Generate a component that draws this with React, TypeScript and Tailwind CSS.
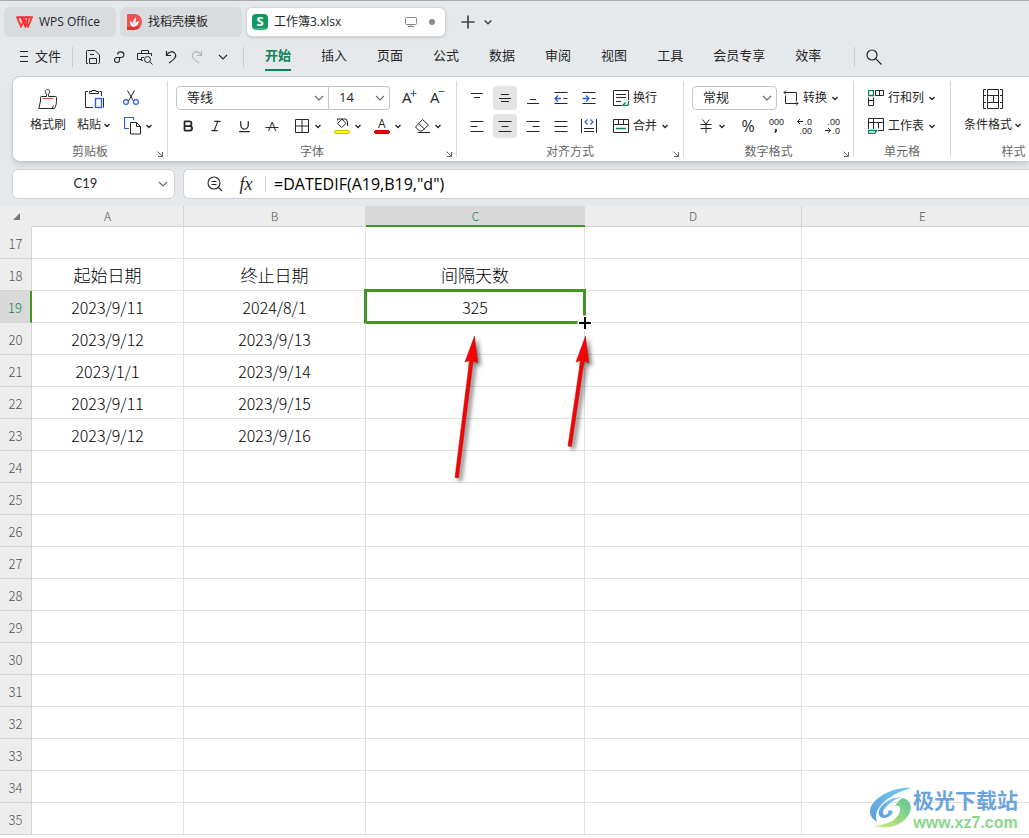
import { FC, ReactNode, useState } from 'react';
import { Bold, Italic, Underline } from 'lucide-react';

interface IRow {
  id: number;
  cells: string[];
}

const columns = ['A', 'B', 'C', 'D', 'E'];

const filled: Record<number, string[]> = {
  18: ['起始日期', '终止日期', '间隔天数'],
  19: ['2023/9/11', '2024/8/1', '325'],
  20: ['2023/9/12', '2023/9/13'],
  21: ['2023/1/1', '2023/9/14'],
  22: ['2023/9/11', '2023/9/15'],
  23: ['2023/9/12', '2023/9/16'],
};

const rows: IRow[] = Array.from({ length: 19 }, (_, i) => ({
  id: 17 + i,
  cells: columns.map((_, c) => filled[17 + i]?.[c] ?? ''),
}));

const menu = ['开始', '插入', '页面', '公式', '数据', '审阅', '视图', '工具', '会员专享', '效率'];

const BLUE = '#2b5fe0';
const GREEN = '#0b8457';

interface IIcon {
  w?: number;
  h?: number;
  children: ReactNode;
}

const Icon: FC<IIcon> = ({ w = 16, h = 16, children }) => (
  <svg
    width={w}
    height={h}
    viewBox={`0 0 ${w} ${h}`}
    fill="none"
    stroke="currentColor"
    className="shrink-0"
    aria-hidden="true"
  >
    {children}
  </svg>
);

const Caret = () => (
  <Icon w={8} h={8}>
    <path d="M1.5 3L4 5.5L6.5 3" strokeWidth="1.4" />
  </Icon>
);

const Chevron = () => (
  <Icon w={10} h={8}>
    <path d="M1 2l4 4l4-4" strokeWidth="1.1" />
  </Icon>
);

const Separator = () => <div className="h-5 w-px bg-[#c9cccf]" />;

interface ITool {
  title: string;
  active?: boolean;
  children: ReactNode;
}

const Tool: FC<ITool> = ({ title, active, children }) => (
  <button
    type="button"
    title={title}
    className={
      active
        ? 'flex size-6 items-center justify-center rounded bg-[#e4e4e4]'
        : 'flex size-6 items-center justify-center rounded hover:bg-gray-100'
    }
  >
    {children}
  </button>
);

const DropTool: FC<ITool> = ({ title, children }) => (
  <button type="button" title={title} className="flex h-6 w-10 items-center rounded hover:bg-gray-100">
    <span className="flex w-6 justify-center">{children}</span>
    <Caret />
  </button>
);

interface ITextTool {
  icon: ReactNode;
  label: string;
  drop?: boolean;
}

const TextTool: FC<ITextTool> = ({ icon, label, drop }) => (
  <button type="button" className="flex h-6 items-center gap-1 rounded hover:bg-gray-100">
    {icon}
    <span>{label}</span>
    {drop ? <Caret /> : null}
  </button>
);

interface IPicker {
  label: string;
  value: string;
  options: string[];
  className: string;
}

const Picker: FC<IPicker> = ({ label, value, options, className }) => (
  <div className={'relative h-6 border border-[#c4c6c8] bg-white ' + className}>
    <select
      aria-label={label}
      defaultValue={value}
      className="h-full w-full appearance-none pl-[10px] text-[13px] outline-none"
    >
      {options.map((option) => (
        <option key={option}>{option}</option>
      ))}
    </select>
    <span className="pointer-events-none absolute right-1 top-[7px] text-[#666]">
      <Chevron />
    </span>
  </div>
);

interface IGroup {
  title: string;
  className: string;
  launcher?: boolean;
  children: ReactNode;
}

const Group: FC<IGroup> = ({ title, className, launcher = true, children }) => (
  <section className={'my-1 flex shrink-0 flex-col border-r border-[#d6d8da] pt-[3px] ' + className}>
    <div className="h-14 shrink-0">{children}</div>
    <div className="relative flex grow items-end justify-center leading-[10px] text-[#666]">
      <span>{title}</span>
      {launcher ? (
        <button type="button" title={title + '设置'} className="absolute bottom-0 right-1">
          <Icon w={6} h={6}>
            <path d="M.5 .5L5 5M5.5 1v4.5H1" />
          </Icon>
        </button>
      ) : null}
    </div>
  </section>
);

const TitleBar = () => (
  <header className="flex h-[38px] shrink-0 items-center gap-1 border-t border-[#aaa8ab] px-1 pt-[5px]">
    <button type="button" className="flex h-[30px] w-28 items-center gap-[6px] rounded-md bg-[#d9dcdf] pl-3">
      <Icon w={17} h={12}>
        <path d="M.5 1.2H12.5L9.5 10.5L5.5 1.5" stroke="#f5243c" strokeWidth="1.9" />
        <path d="M1 1.2L5 10.5L8.5 3L12 10.5L16 1.2H12.5" stroke="#fb3a2c" strokeWidth="1.9" />
      </Icon>
      WPS Office
    </button>
    <button type="button" className="flex h-[30px] w-[122px] items-center gap-[6px] rounded-md bg-[#d9dcdf] pl-[7px]">
      <Icon w={15} h={16}>
        <path d="M1 0h6.5a7.5 8 0 0 1 0 16H1a1 1 0 0 1-1-1V1a1 1 0 0 1 1-1z" fill="#ee5253" stroke="none" />
        <path d="M0 13h12.5A7.5 8 0 0 1 7.5 16H1a1 1 0 0 1-1-1z" fill="#d93638" stroke="none" />
        <path
          d="M6.5 13C3.5 12 3 9.5 3 7C5 8 6 9.5 6.5 11C5.5 8 6.5 5 8.5 3.5C9.5 6 8.5 8.5 7.5 10.5C8.5 8.5 10 7.5 12 7C11.5 10 9.5 12.5 6.5 13z"
          fill="#fff"
          stroke="none"
        />
      </Icon>
      找稻壳模板
    </button>
    <div className="flex h-[30px] w-[200px] items-center rounded-md border border-[#d3d5d8] bg-white pl-[5px] pr-[10px] shadow-sm">
      <span className="flex size-4 items-center justify-center rounded-sm border-b-2 border-[#3bb57e] bg-[#109a62] text-[13px] font-bold leading-none text-white">
        S
      </span>
      <span className="ml-[6px] grow">工作簿3.xlsx</span>
      <span className="mr-3 text-[#858789]">
        <Icon w={12} h={12}>
          <rect x=".5" y="1.5" width="11" height="7" rx="1" />
          <path d="M3 10.5h6M6 8.5v2" />
        </Icon>
      </span>
      <span className="size-[6px] rounded-full bg-[#8a8c8e]" />
    </div>
    <button type="button" title="新建" className="ml-[10px] text-[#444]">
      <Icon w={16} h={16}>
        <path d="M8 1.5v13M1.5 8h13" strokeWidth="1.7" />
      </Icon>
    </button>
    <button type="button" title="更多" className="ml-1 text-[#444]">
      <Icon w={8} h={8}>
        <path d="M.7 2.5L4 5.8L7.3 2.5" strokeWidth="1.5" />
      </Icon>
    </button>
  </header>
);

const quickTools = [
  {
    title: '保存',
    icon: (
      <Icon>
        <path d="M3 14.5H1.5V2.5a1 1 0 0 1 1-1H10L14.5 6v7.5a1 1 0 0 1-1 1H13M4.5 14.5V9.5h7v5zM5 5.5h4" />
      </Icon>
    ),
  },
  {
    title: '分享',
    icon: (
      <Icon w={14} h={14}>
        <path d="M5.5 4.5a3.2 2.8 0 1 1 3.2 3H5a2.5 2.5 0 1 0 2.5 2.5V8" strokeWidth="1.1" />
      </Icon>
    ),
  },
  {
    title: '打印预览',
    icon: (
      <Icon>
        <path d="M4.5 4V1.5h7V4M6 11.5H4.5V8.5H7M4 10.5H.5V4.5h14V7" />
        <circle cx="10.5" cy="10.5" r="3" />
        <path d="M12.8 12.8L15.5 15.5" />
      </Icon>
    ),
  },
  {
    title: '撤销',
    icon: (
      <Icon w={14} h={14}>
        <path d="M2.5 1v4.5H7M2.5 5.5C5 1 9 .8 11 3.5S11 9 5 13" strokeWidth="1.2" />
      </Icon>
    ),
  },
  {
    title: '恢复',
    icon: (
      <span className="text-[#b3b6b9]">
        <Icon w={14} h={14}>
          <path d="M11.5 1v4.5H7M11.5 5.5C9 1 5 .8 3 3.5S3 9 9 13" strokeWidth="1.2" />
        </Icon>
      </span>
    ),
  },
  { title: '自定义', icon: <Chevron /> },
];

interface IMenuBar {
  current: string;
  onSelect: (name: string) => void;
}

const MenuBar: FC<IMenuBar> = ({ current, onSelect }) => (
  <nav className="flex h-[38px] shrink-0 items-center text-[13px]">
    <button type="button" className="ml-5 flex items-center gap-[7px]">
      <Icon w={8} h={12}>
        <path d="M0 .5h8M0 5.5h8M0 10.5h8" />
      </Icon>
      文件
    </button>
    <div className="ml-[11px] mr-[7px]">
      <Separator />
    </div>
    {quickTools.map((tool) => (
      <button key={tool.title} type="button" title={tool.title} className="flex size-[26px] items-center justify-center">
        {tool.icon}
      </button>
    ))}
    <div className="ml-[7px] mr-[21px]">
      <Separator />
    </div>
    <div className="flex gap-[30px]">
      {menu.map((name) => (
        <button
          key={name}
          type="button"
          onClick={() => onSelect(name)}
          className={
            name === current
              ? 'h-7 whitespace-nowrap border-b-2 border-[#0b8457] font-bold text-[#0b8457]'
              : 'h-7 whitespace-nowrap border-b-2 border-transparent'
          }
        >
          {name}
        </button>
      ))}
    </div>
    <div className="ml-[33px] mr-[11px]">
      <Separator />
    </div>
    <button type="button" title="搜索">
      <Icon w={16} h={16}>
        <circle cx="6" cy="6" r="5" strokeWidth="1.2" />
        <path d="M9.8 9.8L15.5 15.5" strokeWidth="1.2" />
      </Icon>
    </button>
  </nav>
);

const ClipboardGroup = () => (
  <Group title="剪贴板" className="w-[155px]">
    <div className="flex gap-1 pl-[14px]">
      <button type="button" className="flex w-[42px] flex-col items-center pt-[5px]">
        <Icon w={20} h={20}>
          <path d="M8.5 7.5V5.5L7.5 3.5a2.2 2.2 0 1 1 4 0L10.5 5.5v2M8.5 7.5h-5a1 1 0 0 0-1 1V12L.8 19.5H16.5c1.2-2 2-5 2-7v-4a1 1 0 0 0-1-1h-7M14.5 19.5l.8-3" />
          <path d="M4.5 9.5h11" stroke="#d4581c" />
        </Icon>
        <span className="mt-2 whitespace-nowrap">格式刷</span>
      </button>
      <button type="button" className="flex w-[42px] flex-col items-center pt-[5px]">
        <Icon w={20} h={20}>
          <path d="M4 2.5H1.5v16H9M15.5 2.5h2V7M19.5 9v9.5" />
          <path d="M5.5 4.5v-2H8v-1h4v1h2.5v2z" />
          <rect x="11.5" y="9.5" width="6" height="9" stroke={BLUE} strokeWidth="1.4" />
        </Icon>
        <span className="mt-2 flex items-center gap-[2px] whitespace-nowrap">
          粘贴
          <Caret />
        </span>
      </button>
      <div>
        <div className="flex h-7 items-center">
          <Tool title="剪切">
            <Icon>
              <path d="M4.5 .5L10.5 11M11.5 .5L5.5 11" />
              <circle cx="3" cy="12" r="2.4" stroke={BLUE} strokeWidth="1.2" />
              <circle cx="13" cy="12" r="2.4" stroke={BLUE} strokeWidth="1.2" />
            </Icon>
          </Tool>
        </div>
        <div className="flex h-7 items-center pl-[2px]">
          <DropTool title="复制">
            <Icon w={18} h={18}>
              <path d="M5 11.5H.5V.5h9V3" stroke={BLUE} strokeWidth="1.2" />
              <path d="M6.5 5.5h6l4 4v7.5h-10zM12.5 5.5v4h4" />
            </Icon>
          </DropTool>
        </div>
      </div>
    </div>
  </Group>
);

const FontGroup = () => (
  <Group title="字体" className="w-[289px]">
    <div className="flex h-7 items-center pl-2">
      <Picker label="字体" value="等线" options={['等线', '宋体', '黑体']} className="w-[153px] rounded-l" />
      <Picker label="字号" value="14" options={['11', '12', '14', '16']} className="w-[61px] rounded-r border-l-0" />
      <div className="ml-[7px] flex gap-1">
        <Tool title="增大字号">
          <Icon w={18} h={22}>
            <text x="2" y="16" fontSize="15" fill="currentColor" stroke="none">A</text>
            <path d="M10.5 6.5h6M13.5 3.5v6" stroke={BLUE} strokeWidth="1.2" />
          </Icon>
        </Tool>
        <Tool title="减小字号">
          <Icon w={18} h={22}>
            <text x="2" y="16" fontSize="15" fill="currentColor" stroke="none">A</text>
            <path d="M10.5 4.5h6" stroke={BLUE} strokeWidth="1.2" />
          </Icon>
        </Tool>
      </div>
    </div>
    <div className="flex h-7 items-center pl-2">
      <div className="mr-[6px] flex gap-1">
        <Tool title="加粗">
          <Bold size={14} strokeWidth={3} />
        </Tool>
        <Tool title="倾斜">
          <Italic size={14} strokeWidth={2} />
        </Tool>
        <Tool title="下划线">
          <Underline size={15} strokeWidth={2} />
        </Tool>
        <Tool title="删除线">
          <Icon w={14} h={20}>
            <text x="3" y="15" fontSize="13" fill="currentColor" stroke="none">A</text>
            <path d="M.5 11.5h13" />
          </Icon>
        </Tool>
      </div>
      <DropTool title="边框">
        <Icon w={14} h={14}>
          <path d="M.5 .5h13v13H.5zM7 .5v13M.5 7h13" />
        </Icon>
      </DropTool>
      <DropTool title="填充颜色">
        <Icon w={18} h={18}>
          <path d="M4.5 3.5V2h8.5l1.5 3v4M9 2L4.5 6.5L8.5 10.5L13 6.5z" />
          <rect x="1.5" y="13.5" width="15" height="3" rx="1.5" fill="#ffff00" stroke="#c4c400" />
        </Icon>
      </DropTool>
      <DropTool title="字体颜色">
        <Icon w={18} h={22}>
          <text x="5" y="13" fontSize="12" fill="currentColor" stroke="none">A</text>
          <rect x="1.5" y="15.5" width="15" height="3" rx="1.5" fill="#ff0000" stroke="#c00000" />
        </Icon>
      </DropTool>
      <DropTool title="清除">
        <Icon w={16} h={16}>
          <path d="M8.5 1.5L14.5 7L8 13H5.5L1.5 9zM4.5 5.5L10.5 11M3.5 14.5h12.5" />
        </Icon>
      </DropTool>
    </div>
  </Group>
);

const AlignGroup = () => (
  <Group title="对齐方式" className="w-[227px]">
    <div className="flex h-7 items-center gap-1 pl-2">
      <Tool title="顶端对齐">
        <Icon w={14} h={14}>
          <path d="M1 2.5h12M4 6.5h6" strokeWidth="1.2" />
        </Icon>
      </Tool>
      <Tool title="垂直居中" active>
        <Icon w={14} h={14}>
          <path d="M3 3.5h8M1 7.5h12M3 10.5h8" strokeWidth="1.2" />
        </Icon>
      </Tool>
      <Tool title="底端对齐">
        <Icon w={14} h={14}>
          <path d="M4 8.5h6M1 12.5h12" strokeWidth="1.2" />
        </Icon>
      </Tool>
      <Tool title="减少缩进量">
        <Icon w={14} h={14}>
          <path d="M.5 1.5h13M.5 12.5h13M9.5 7.5h4" />
          <path d="M7 7.5H1M4 4.5l-3 3l3 3" stroke={BLUE} strokeWidth="1.3" />
        </Icon>
      </Tool>
      <Tool title="增加缩进量">
        <Icon w={14} h={14}>
          <path d="M.5 1.5h13M.5 12.5h13M9.5 7.5h4" />
          <path d="M.5 7.5h6M4 4.5l3 3l-3 3" stroke={BLUE} strokeWidth="1.3" />
        </Icon>
      </Tool>
      <div className="ml-2">
        <TextTool
          label="换行"
          icon={
            <Icon>
              <path d="M9 15.5H.5V.5h15V10M3 4.5h10M3 7.5h10M3 11.5h5" />
              <path d="M15.5 11v2.5a2 2 0 0 1-2 2H10M12.5 12.5l-3 3" stroke={GREEN} strokeWidth="1.3" />
            </Icon>
          }
        />
      </div>
    </div>
    <div className="flex h-7 items-center gap-1 pl-2">
      <Tool title="左对齐">
        <Icon w={14} h={14}>
          <path d="M.5 2.5h13M.5 7.5h7M.5 12.5h13" />
        </Icon>
      </Tool>
      <Tool title="水平居中" active>
        <Icon w={14} h={14}>
          <path d="M.5 2.5h13M3.5 7.5h7M.5 12.5h13" />
        </Icon>
      </Tool>
      <Tool title="右对齐">
        <Icon w={14} h={14}>
          <path d="M.5 2.5h13M6.5 7.5h7M.5 12.5h13" />
        </Icon>
      </Tool>
      <Tool title="两端对齐">
        <Icon w={14} h={14}>
          <path d="M.5 2.5h13M.5 7.5h13M.5 12.5h13" />
        </Icon>
      </Tool>
      <Tool title="分散对齐">
        <Icon>
          <path d="M.5 1v14M15.5 1v14M3 10.5h10M3 13.5h10" />
          <path d="M6.5 1.5L4 4l2.5 2.5M9.5 1.5L12 4L9.5 6.5" stroke={BLUE} strokeWidth="1.2" />
        </Icon>
      </Tool>
      <div className="ml-2">
        <TextTool
          label="合并"
          drop
          icon={
            <Icon>
              <path d="M.5 1.5h15v13H.5zM.5 6.5h15M5.5 1.5v5M10.5 1.5v5" />
              <path d="M3 10.5h10" stroke={GREEN} strokeWidth="1.3" />
            </Icon>
          }
        />
      </div>
    </div>
  </Group>
);

interface ITinyText {
  x: number;
  y: number;
  children: string;
}

const TinyText: FC<ITinyText> = ({ x, y, children }) => (
  <text
    x={x}
    y={y}
    fontSize="9"
    textAnchor="end"
    fill="currentColor"
    stroke="none"
    className="font-['Liberation_Sans',sans-serif]"
  >
    {children}
  </text>
);

const NumberGroup = () => (
  <Group title="数字格式" className="w-[170px]">
    <div className="flex h-7 items-center gap-[6px] pl-2">
      <Picker label="数字格式" value="常规" options={['常规', '数值', '日期']} className="w-[85px] rounded" />
      <TextTool
        label="转换"
        drop
        icon={
          <Icon>
            <path d="M3 .5L1 2.5L3 4.5M1 2.5h12.5V11M13 11.5l2 2l-2 2M15 13.5H2.5V5.5" />
          </Icon>
        }
      />
    </div>
    <div className="flex h-7 items-center pl-[10px]">
      <DropTool title="货币">
        <Icon w={12} h={14}>
          <path d="M2.5 .5L6 5L9.5 .5M6 5v9M.5 5.5h11M.5 9.5h11" />
        </Icon>
      </DropTool>
      <div className="ml-[2px] flex gap-1">
        <Tool title="百分比">
          <span className="text-base leading-6">%</span>
        </Tool>
        <Tool title="千位分隔">
          <Icon w={16} h={20}>
            <TinyText x={16} y={9}>000</TinyText>
            <path d="M8 13v2l-1 1.5" strokeWidth="1.8" />
          </Icon>
        </Tool>
        <Tool title="增加小数位">
          <Icon w={16} h={20}>
            <path d="M7 5.5H1.5M4 3L1.5 5.5L4 8" />
            <TinyText x={16} y={9}>.0</TinyText>
            <TinyText x={16} y={18}>.00</TinyText>
          </Icon>
        </Tool>
        <Tool title="减少小数位">
          <Icon w={16} h={20}>
            <TinyText x={16} y={9}>.00</TinyText>
            <path d="M1 14.5h5.5M4 12L6.5 14.5L4 17" />
            <TinyText x={16} y={18}>.0</TinyText>
          </Icon>
        </Tool>
      </div>
    </div>
  </Group>
);

const CellGroup = () => (
  <Group title="单元格" className="w-[97px]" launcher={false}>
    <div className="flex h-7 items-center pl-[14px]">
      <TextTool
        label="行和列"
        drop
        icon={
          <Icon>
            <path d="M7.5 .5h8v5h-8zM11.5 .5v5M.5 7.5v8h5v-8M.5 10.5h5" />
            <path d="M.5 .5h5v5h-5z" stroke={GREEN} strokeWidth="1.3" />
          </Icon>
        }
      />
    </div>
    <div className="flex h-7 items-center pl-[14px]">
      <TextTool
        label="工作表"
        drop
        icon={
          <Icon>
            <path d="M.5 11V.5h15v12H10M.5 4.5h15M5.5 .5v10.5M10.5 4.5v6" />
            <path d="M.5 12.5h8l-1.5 3H.5z" stroke={GREEN} strokeWidth="1.3" />
          </Icon>
        }
      />
    </div>
  </Group>
);

const StyleGroup = () => (
  <Group title="样式" className="w-[126px]" launcher={false}>
    <button type="button" className="ml-[13px] flex flex-col items-center pt-[5px]">
      <Icon w={20} h={20}>
        <path d="M3 .5H.5v19H3M17 .5h2.5v19H17M.5 6.5H3M.5 13.5H3M17 6.5h2.5M17 13.5h2.5" />
        <path d="M4.5 .5h11v19h-11zM4.5 6.5h11M4.5 13.5h11M10.5 6.5v7" />
      </Icon>
      <span className="mt-2 flex items-center gap-[2px] whitespace-nowrap">
        条件格式
        <Caret />
      </span>
    </button>
  </Group>
);

const FormulaBar = () => (
  <div className="flex shrink-0 gap-2 py-[7px] pl-3">
    <div className="flex h-[30px] w-[163px] items-center rounded-md border border-[#cfd1d3] bg-white pr-[6px]">
      <input
        aria-label="名称框"
        defaultValue="C19"
        className="min-w-0 grow text-center font-['Lato',sans-serif] text-[13px] outline-none"
      />
      <button type="button" title="名称列表" className="text-[#666]">
        <Chevron />
      </button>
    </div>
    <div className="flex h-[30px] grow items-center rounded-l-md border border-r-0 border-[#cfd1d3] bg-white pl-[23px]">
      <button type="button" title="浏览公式">
        <Icon>
          <circle cx="7" cy="7" r="6" strokeWidth="1.1" />
          <path d="M11.5 11.5L15 15M4.5 5.5h5M4.5 8.5h5" strokeWidth="1.2" />
        </Icon>
      </button>
      <button
        type="button"
        title="插入函数"
        className="ml-[15px] w-4 font-['Liberation_Serif',serif] text-lg italic leading-none"
      >
        fx
      </button>
      <div className="ml-[11px] h-4 w-px bg-[#d0d2d4]" />
      <input
        aria-label="编辑栏"
        defaultValue={'=DATEDIF(A19,B19,"d")'}
        className="min-w-0 grow pl-2 text-base text-black outline-none"
      />
    </div>
  </div>
);

const Sheet = () => (
  <table className="w-[1044px] table-fixed border-separate border-spacing-0 font-['Noto_Sans_CJK_SC',sans-serif] text-black">
    <colgroup>
      <col className="w-8" />
      <col className="w-[152px]" />
      <col className="w-[182px]" />
      <col className="w-[219px]" />
      <col className="w-[217px]" />
      <col />
    </colgroup>
    <thead>
      <tr className="h-[21px] bg-[#ededed] text-xs leading-4 text-[#555]">
        <td className="border-b border-[#ededed]">
          <span className="flex justify-end pr-3 text-[#777]">
            <Icon w={7} h={7}>
              <path d="M7 0v7H0z" fill="currentColor" stroke="none" />
            </Icon>
          </span>
        </td>
        {columns.map((column) => (
          <th
            key={column}
            scope="col"
            className={
              column === 'C'
                ? 'border-b-2 border-[#439523] bg-[#d9d9d9] p-0 font-light text-[#0b8457]'
                : 'border-b border-r border-[#d4d4d4] p-0 font-light'
            }
          >
            {column}
          </th>
        ))}
      </tr>
    </thead>
    <tbody>
      {rows.map((row) => (
        <tr key={row.id} className="h-8">
          <th
            scope="row"
            className={
              row.id === 19
                ? 'border-b border-r-2 border-b-[#d4d4d4] border-r-[#439523] bg-[#d9d9d9] p-0 pt-[2px] text-[13px] font-light leading-5 text-[#0b8457]'
                : 'border-b border-r border-[#d4d4d4] bg-[#ededed] p-0 pt-[2px] text-[13px] font-light leading-5 text-[#555]'
            }
          >
            {row.id}
          </th>
          {row.cells.map((cell, index) => (
            <td
              key={columns[index]}
              className={
                row.id === 18
                  ? 'border-b border-r border-[#e1e1e1] p-0 text-center text-[17px] font-light leading-6'
                  : 'relative border-b border-r border-[#e1e1e1] p-0 text-center text-base font-light leading-6'
              }
            >
              {cell}
              {row.id === 19 && index === 2 ? (
                <span className="absolute -inset-0.5 border-[3px] border-[#439523]" />
              ) : null}
            </td>
          ))}
        </tr>
      ))}
    </tbody>
  </table>
);

// Arrows and the fill-handle cursor drawn over the cells
const Annotations = () => (
  <svg
    width="620"
    height="300"
    viewBox="0 0 620 300"
    className="pointer-events-none absolute left-0 top-0"
    aria-hidden="true"
  >
    <g fill="#ff0000" stroke="#8d2020" strokeWidth=".5" className="drop-shadow-[3px_3px_2px_rgba(0,0,0,0.5)]">
      <path d="M474.5 130L477.8 157L473.2 155L458.5 272L455 271.5L469.5 154.5L465 156z" />
      <path d="M585.5 130L588.8 157L584.2 155L571.5 240.5L568 240L580.5 154.5L576 156z" />
    </g>
    <path d="M577.5 117h15M585 109.5v15" stroke="#fff" strokeWidth="5" />
    <path d="M579 117h12M585 111v12" stroke="#000" strokeWidth="2" />
  </svg>
);

const Watermark = () => (
  <div className="absolute bottom-[6px] right-[11px] flex items-center gap-[1px]">
    <svg width="42" height="42" viewBox="0 0 42 42" aria-hidden="true">
      <defs>
        <linearGradient id="sky" x1="0" y1="1" x2="1" y2="0">
          <stop offset="0" stopColor="#5f9bdc" />
          <stop offset="1" stopColor="#72cdf0" />
        </linearGradient>
        <linearGradient id="leaf" x1="0" y1="1" x2="1" y2="0">
          <stop offset="0" stopColor="#d3ea78" />
          <stop offset="1" stopColor="#5cc596" />
        </linearGradient>
      </defs>
      <path d="M42 1C26 -1 1 10 0 24c0 4 2 8 7 11C2 22 18 7 42 1z" fill="url(#sky)" />
      <path
        d="M31 10C18 11 7 20 9 28c2 5 10 3 13-1c2-3-1-5-4-3c1 2-1 4-4 4c-4-3 4-13 17-18z"
        fill="url(#sky)"
      />
      <path d="M32 11c16 3 9 25-12 29c-6 1-12 0-16-1c14-1 24-7 26-15c1-4-1-6-5-5c2-3 4-6 7-8z" fill="url(#leaf)" />
    </svg>
    <div className="flex flex-col items-center font-bold">
      <span className="font-['Noto_Sans_CJK_SC',sans-serif] text-[21px] leading-[30px] text-[#6ba3dc]">极光下载站</span>
      <span className="font-['Liberation_Sans',sans-serif] text-base leading-[18px] text-[#8bd68d]">www.xz7.com</span>
    </div>
  </div>
);

const App: FC = () => {
  const [current, setCurrent] = useState<string>('开始');

  return (
    <div className="flex h-screen flex-col overflow-hidden bg-[#e6e9ec] font-['Open_Sans','Noto_Sans_CJK_SC',sans-serif] text-xs text-[#262626]">
      <TitleBar />
      <MenuBar current={current} onSelect={setCurrent} />
      <div className="ml-3 flex h-[86px] shrink-0 overflow-hidden rounded-l-lg border border-r-0 border-[#c9cbce] bg-white shadow-md">
        <ClipboardGroup />
        <FontGroup />
        <AlignGroup />
        <NumberGroup />
        <CellGroup />
        <StyleGroup />
      </div>
      <FormulaBar />
      <main className="relative grow overflow-hidden bg-white">
        <Sheet />
        <Annotations />
        <Watermark />
      </main>
    </div>
  );
};

export default App;
